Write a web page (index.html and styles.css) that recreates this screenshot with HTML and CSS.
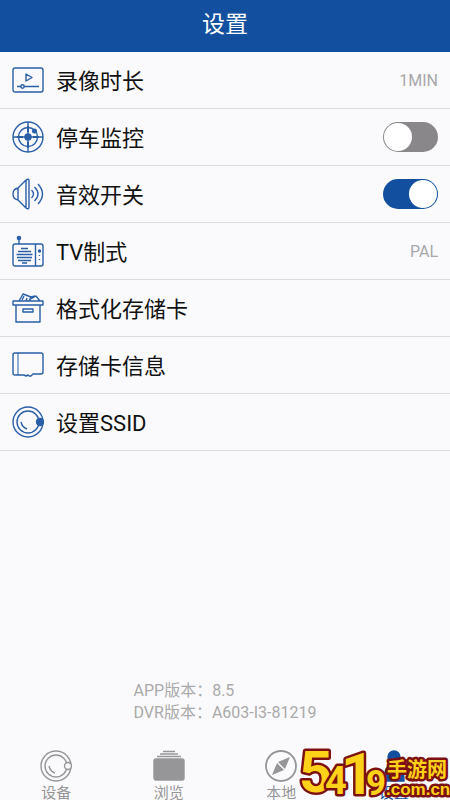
FILE: index.html
```html
<!DOCTYPE html>
<html lang="zh-CN">
<head>
<meta charset="utf-8">
<meta name="viewport" content="width=device-width, initial-scale=1">
<title>设置</title>
<link rel="stylesheet" href="styles.css">
</head>
<body>
<div class="app">
  <header class="header"><h1>设置</h1></header>
  <main class="main">
    <ul class="list">
      <li><button class="row" type="button">
        <svg class="icon" viewBox="0 0 32 32"><rect x="1" y="4" width="30" height="24" rx="2"/><path d="M14 10v7l6-3.500zM5 22.500h4M12 22.500h15"/><circle cx="10.500" cy="22.500" r="1.700"/></svg>
        <span class="label">录像时长</span><span class="value">1MIN</span></button></li>
      <li><label class="row">
        <svg class="icon" viewBox="0 0 32 32"><circle cx="16" cy="16" r="15"/><circle cx="16" cy="16" r="9.500"/><path d="M16 1v30M1 16h30"/><circle class="solid" cx="16" cy="16" r="3"/><circle class="solid" cx="22.500" cy="10" r="1.800"/><path d="M5 16h6M21 16h6M16 5v6M16 21v6" stroke-width="2"/></svg>
        <span class="label">停车监控</span><input class="switch" type="checkbox"></label></li>
      <li><label class="row">
        <svg class="icon" viewBox="0 0 32 32"><path d="M6 10L14 2q3-2 3 1v26q0 3-3 1L6 22Q1 21 1 16t5-6zM6 10v12M14 2v28M19.500 12q4 4 0 8M22.500 9q7 7 0 14M26 6q9 10 0 20"/></svg>
        <span class="label">音效开关</span><input class="switch" type="checkbox" checked></label></li>
      <li><button class="row" type="button">
        <svg class="icon" viewBox="0 0 32 32"><rect x="1" y="9" width="30" height="22" rx="2"/><path d="M7 3v6M23.500 9v22"/><circle class="solid" cx="7" cy="3" r="1.600"/><path d="M9 13.500h7M6 16.500h13M4.500 19.500h16M5 22.500h15M6 25.500h13M10 28h5" stroke-width="1.300"/><circle class="solid" cx="27.500" cy="16" r="1"/><path d="M27.500 20v1M27.500 24v1"/></svg>
        <span class="label">TV制式</span><span class="value">PAL</span></button></li>
      <li><button class="row" type="button">
        <svg class="icon" viewBox="0 0 32 32"><path d="M1 9h30v4H1zM4 13h24v17H4zM7 9l4-7 8 3-2 4M12 4l-2 4M15 6l-1 3M17 8l7-4 4 5M19 5l4-1"/><rect x="11" y="17" width="10" height="3"/></svg>
        <span class="label">格式化存储卡</span></button></li>
      <li><button class="row" type="button">
        <svg class="icon" viewBox="0 0 32 32"><path d="M3 4h26q2 0 2 2v17q0 2-2 2h-8l-2 2h-2l-1-1-2 1-2-1H3q-2 0-2-2V6q0-2 2-2z"/><path d="M6 4v22" stroke-width="1"/></svg>
        <span class="label">存储卡信息</span></button></li>
      <li><button class="row" type="button">
        <svg class="icon" viewBox="0 0 32 32"><circle cx="16" cy="16" r="15"/><circle cx="16" cy="16" r="11"/><path d="M9 16q1 5 6 7"/><circle class="solid" cx="28" cy="16" r="3.500"/></svg>
        <span class="label">设置SSID</span></button></li>
    </ul>
    <div class="version"><p>APP版本：8.5</p><p>DVR版本：A603-I3-81219</p></div>
  </main>
  <nav class="tabs">
    <a class="tab" href="#device"><svg class="icon" viewBox="0 0 32 32"><circle cx="16" cy="16" r="15"/><circle cx="16" cy="16" r="11"/><path d="M9 16q1 5 6 7"/><circle class="hollow" cx="28" cy="16" r="3.500"/></svg><span>设备</span></a>
    <a class="tab" href="#browse"><svg class="icon" viewBox="0 0 32 32"><path d="M10 1.500h12M7 4h18M4 6.500h24"/><rect class="solid" x="1" y="9" width="30" height="21" rx="2"/></svg><span>浏览</span></a>
    <a class="tab" href="#local"><svg class="icon" viewBox="0 0 32 32"><circle cx="16" cy="16" r="15" stroke-width="1.800"/><path class="needle" d="M25 7l-5 12-7-7zM7 25l5-12 7 7z"/></svg><span>本地</span></a>
    <a class="tab active" href="#settings"><svg class="icon" viewBox="0 0 32 32"><circle class="solid" cx="16" cy="7" r="6"/><path class="solid" d="M6 31q0-17 10-17t10 17z"/></svg><span>设置</span></a>
  </nav>
  <svg class="badge" viewBox="0 0 152 54" role="img" aria-label="5419手游网.com.cn">
    <g class="badge-text">
      <text x="1" y="46" font-size="58">5</text><text x="27" y="48" font-size="38">4</text><text x="43" y="48" font-size="58">1</text><text x="68" y="49" font-size="35">9</text>
      <text class="cjk" x="89" y="31" font-size="20">手游网</text><text class="domain" x="88" y="49" font-size="17">.com.cn</text>
    </g>
  </svg>
</div>
</body>
</html>
```
FILE: styles.css
```css
* { box-sizing: border-box; }
body { margin: 0; background: #fafafc; color: #111; font-family: Roboto, "Noto Sans CJK SC", sans-serif; }
h1, p, ul { margin: 0; padding: 0; }
.app { position: relative; min-height: 100vh; display: flex; flex-direction: column; overflow: hidden; }
.header { height: 52px; padding-bottom: 8px; display: flex; align-items: center; justify-content: center; background: #12509f; color: #fff; }
h1 { font-size: 23px; font-weight: 400; }
.main { flex: 1; display: flex; flex-direction: column; }
.list { list-style: none; }
.row { width: 100%; height: 57px; padding: 0 12px; display: flex; align-items: center; gap: 12px; border: 0; border-bottom: 1px solid #dcdcde; background: none; font: inherit; color: inherit; text-align: left; }
.icon { width: 32px; height: 32px; flex: none; fill: none; stroke: currentColor; stroke-width: 1.4; stroke-linejoin: round; }
.row .icon { color: #2a5fa8; }
.icon .solid { fill: currentColor; }
.icon .needle { fill: currentColor; stroke: none; }
.icon .hollow { fill: #fafafc; }
.label { flex: 1; padding-bottom: 2px; font-size: 22px; }
.value { font-size: 16px; color: #a8a8aa; }
.switch { appearance: none; width: 55px; height: 30px; margin: 0; padding: 1px; display: flex; border-radius: 15px; background: #89878a; }
.switch::before { content: ""; width: 28px; height: 28px; border-radius: 50%; background: #fff; }
.switch:checked { background: #12509f; justify-content: flex-end; }
.version { margin: auto auto 14px; font-size: 16px; line-height: 22px; color: #aaa; }
.tabs { height: 62px; display: grid; grid-template-columns: repeat(4, 1fr); }
.tab { padding-top: 12px; display: flex; flex-direction: column; align-items: center; font-size: 15px; line-height: 22px; color: #969698; text-decoration: none; }
.tab.active { color: #12509f; }
.badge { position: absolute; right: 0; bottom: 0; width: 152px; height: 54px; }
.badge-text { fill: #ffd21a; stroke: #7d1010; stroke-width: 5; stroke-linejoin: round; paint-order: stroke; font-family: Roboto, sans-serif; font-weight: 700; }
.cjk { font-family: "Noto Sans CJK SC", sans-serif; }
.domain { font-family: "Liberation Sans", sans-serif; }
```
